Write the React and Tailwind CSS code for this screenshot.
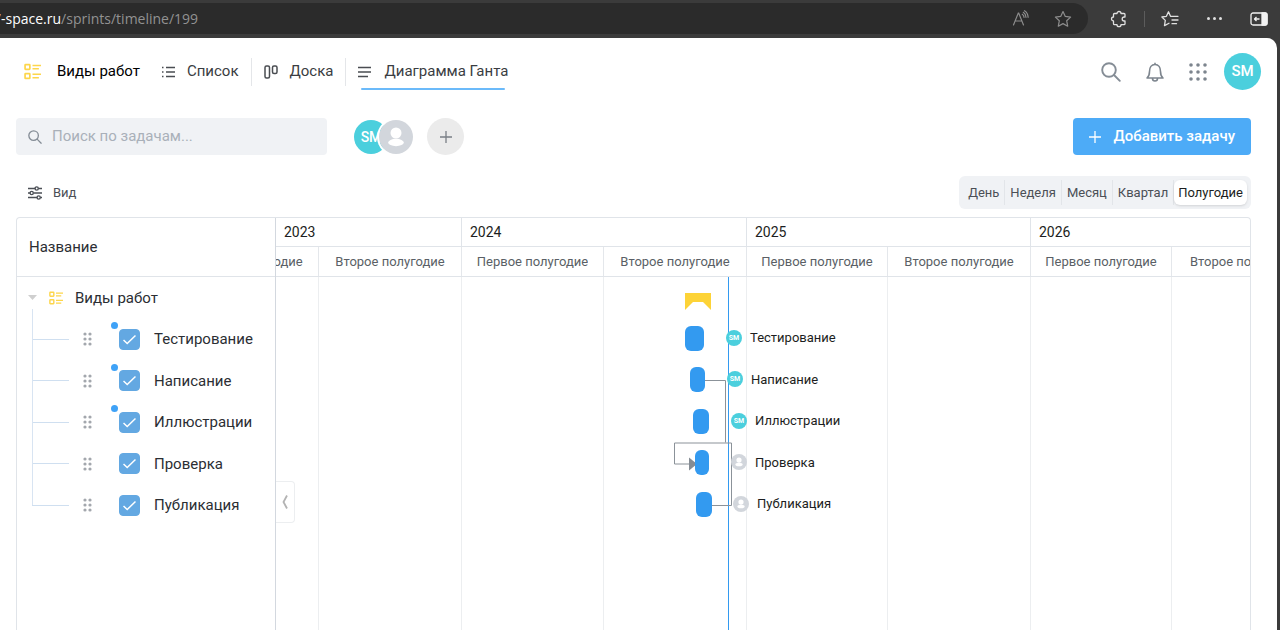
const people = { sm: 'SM', none: null };

const tasks = [
  { name: 'Тестирование', bar: 409, width: 19, tag: 450, who: people.sm, fresh: true },
  { name: 'Написание', bar: 414, width: 15, tag: 451, who: people.sm, fresh: true },
  { name: 'Иллюстрации', bar: 417, width: 16, tag: 455, who: people.sm, fresh: true },
  { name: 'Проверка', bar: 419, width: 14, tag: 455, who: people.none, fresh: false },
  { name: 'Публикация', bar: 420, width: 16, tag: 457, who: people.none, fresh: false },
];

function ReadAloud() {
  return (
    <svg width="18" height="18" viewBox="0 0 18 18" fill="none" stroke="#8d8d8d" strokeWidth="1.2" strokeLinecap="round">
      <path d="M1.500 15 6.300 3h.4l4.800 12M3.200 11h6.600M10.300 4.300c1 .7 1.600 1.700 1.800 3M11.300 2.300c1.600 1 2.500 2.700 2.700 5M12.500.700c2.200 1.300 3.500 3.600 3.600 6.600" />
    </svg>
  );
}

function Star() {
  return (
    <svg width="18" height="18" viewBox="0 0 18 18" fill="none" stroke="#8d8d8d" strokeWidth="1.2" strokeLinejoin="round">
      <path d="m9 1.500 2.300 4.900 5.300.7-3.900 3.700 1 5.400L9 13.600l-4.700 2.600 1-5.400L1.400 7.100l5.300-.7z" />
    </svg>
  );
}

function Puzzle() {
  return (
    <svg width="18" height="18" viewBox="0 0 18 18" fill="none" stroke="#e0e0e0" strokeWidth="1.300" strokeLinejoin="round">
      <path d="M4.500 3.500H7a2 2 0 0 1 4 0h3a1 1 0 0 1 1 1V7h-.8a2 2 0 0 0 0 4h.8v2.700a1 1 0 0 1-1 1h-3a2 2 0 0 1-4 0H4.500a1 1 0 0 1-1-1V11a2 2 0 0 1 0-4V4.500a1 1 0 0 1 1-1z" />
    </svg>
  );
}

function Favorites() {
  return (
    <svg width="18" height="18" viewBox="0 0 18 18" fill="none" stroke="#e0e0e0" strokeWidth="1.300" strokeLinejoin="round" strokeLinecap="round">
      <path d="M9.500 6.300 7.500 1.800 5.400 6.300.9 7l3.400 3.400-.8 5.200L8 13.200M9.500 6.300H17M11 10h6M11 13.700h4.500" />
    </svg>
  );
}

function SidePanel() {
  return (
    <svg width="18" height="14" viewBox="0 0 18 14" fill="none" stroke="#f2f2f2" strokeWidth="1.300" strokeLinejoin="round">
      <rect x="1" y="1" width="16" height="12" rx="2" />
      <path d="M12 1h3a2 2 0 0 1 2 2v8a2 2 0 0 1-2 2h-3z" fill="#f2f2f2" />
      <path d="M9.500 7h-5M6.500 5l-2 2 2 2" />
    </svg>
  );
}

function Board({ size }) {
  return (
    <svg width={size} height={size} viewBox="0 0 16 16" fill="none" stroke="#fdd64b" strokeWidth="1.600">
      <rect x="1" y="1.500" width="4.500" height="4.500" rx="0.500" />
      <rect x="1" y="10" width="4.500" height="4.500" rx="0.500" />
      <path d="M8 2.300h8M8 5.500h6M8 10.600h8M8 13.900h6" strokeWidth="1.400" />
    </svg>
  );
}

function Search({ size }) {
  return (
    <svg width={size} height={size} viewBox="0 0 20 20" fill="none" stroke="#858d96" strokeWidth="1.900" strokeLinecap="round">
      <circle cx="8" cy="8" r="6.800" />
      <path d="m13 13 5.800 5.800" />
    </svg>
  );
}

function Person({ className }) {
  return (
    <svg className={className} viewBox="0 0 34 34">
      <circle cx="17" cy="17" r="17" fill="#d2d6dc" />
      <circle cx="17" cy="13" r="5.500" fill="#fff" />
      <ellipse cx="17" cy="22.500" rx="7.800" ry="3.700" fill="#fff" />
    </svg>
  );
}

function Plus({ stroke }) {
  return (
    <svg width="12" height="12" viewBox="0 0 12 12" stroke={stroke} strokeWidth="1.300">
      <path d="M6 0v12M0 6h12" />
    </svg>
  );
}

function Dots({ className, columns, step, r }) {
  return (
    <svg className={className} width={step * (columns - 1) + 4} height={step * 2 + 4}>
      {[0, 1, 2].map((y) =>
        Array.from({ length: columns }, (_, x) => (
          <circle key={`${x}-${y}`} cx={2 + x * step} cy={2 + y * step} r={r} fill="currentColor" />
        )),
      )}
    </svg>
  );
}

function BrowserBar() {
  return (
    <div className="flex h-[38px] items-center pt-[3px] pb-[4px] text-[#e0e0e0]">
      <div className="flex h-[31px] min-w-0 flex-1 items-center rounded-r-full bg-[#2b2b2b] pr-4">
        <div className="min-w-0 flex-1 overflow-hidden whitespace-nowrap font-['Open_Sans',sans-serif] text-sm text-[#929292]">
          <span className="-ml-[7px] text-white">7-space.ru</span>/sprints/timeline/199
        </div>
        <div className="flex items-center gap-6">
          <button aria-label="Прочесть вслух"><ReadAloud /></button>
          <button aria-label="В избранное"><Star /></button>
        </div>
      </div>
      <div className="flex items-center pr-3 pl-[22px]">
        <button aria-label="Расширения"><Puzzle /></button>
        <span className="mx-4 h-4 w-px bg-[#5c5c5c]" />
        <button aria-label="Избранное"><Favorites /></button>
        <button aria-label="Меню" className="mx-7 flex gap-[3px]">
          <i className="size-[3px] rounded-full bg-current" />
          <i className="size-[3px] rounded-full bg-current" />
          <i className="size-[3px] rounded-full bg-current" />
        </button>
        <button aria-label="Боковая панель"><SidePanel /></button>
      </div>
    </div>
  );
}

function TopNav() {
  return (
    <header className="flex h-[67px] items-center justify-between pr-4 pl-6">
      <nav className="flex items-center text-[15px] text-[#3a3d42]">
        <a href="#work" className="flex items-center gap-4 text-black">
          <Board size={17} />
          Виды работ
        </a>
        <a href="#list" className="ml-[22px] flex items-center gap-3 pr-3">
          <svg width="13" height="12" viewBox="0 0 13 12" fill="none" stroke="#4a4d52" strokeWidth="1.400">
            <path d="M0 1.500h1.500M0 6h1.500M0 10.500h1.500M4 1.500h9M4 6h9M4 10.500h9" />
          </svg>
          Список
        </a>
        <a href="#board" className="flex h-7 items-center gap-3 border-x border-[#e4e6e9] px-3">
          <svg width="14" height="14" viewBox="0 0 14 14" fill="none" stroke="#4a4d52" strokeWidth="1.500">
            <rect x="1" y="1" width="4.500" height="12" rx="1.500" />
            <rect x="8.500" y="1" width="4.500" height="7.500" rx="1.500" />
          </svg>
          Доска
        </a>
        <a href="#gantt" className="relative ml-3 flex h-9 items-center gap-3">
          <svg width="14" height="12" viewBox="0 0 14 12" fill="none" stroke="#4a4d52" strokeWidth="1.500">
            <path d="M0 1.500h13M0 6h13M0 10.500h10" />
          </svg>
          Диаграмма Ганта
          <span className="absolute inset-x-[3px] bottom-0 h-[2px] rounded-full bg-[#6bbafa]" />
        </a>
      </nav>
      <div className="flex items-center text-[#7d858e]">
        <button aria-label="Поиск"><Search size={20} /></button>
        <button aria-label="Уведомления" className="ml-6">
          <svg width="20" height="20" viewBox="0 0 20 20" fill="none" stroke="#7d858e" strokeWidth="1.600" strokeLinejoin="round">
            <path d="M2 16c1.800-1.500 2.500-3.300 2.500-6.500C4.500 5.500 6.500 2.500 10 2.500s5.500 3 5.500 7c0 3.200.7 5 2.500 6.500zM7.500 16.500a2.500 2.500 0 0 0 5 0M10 .8v1.700" />
          </svg>
        </button>
        <button aria-label="Приложения" className="ml-6"><Dots columns={3} step={7} r={1.8} /></button>
        <button className="ml-[17px] size-[37px] rounded-full bg-[#4bcfdd] text-[15px] font-medium text-white">SM</button>
      </div>
    </header>
  );
}

function Toolbar() {
  return (
    <div className="flex h-[63px] items-center justify-between pr-[26px] pl-4">
      <div className="flex items-center">
        <label className="flex h-[37px] w-[311px] items-center gap-[10px] rounded bg-[#f0f2f5] px-3">
          <Search size={14} />
          <input
            type="search"
            aria-label="Поиск по задачам"
            placeholder="Поиск по задачам..."
            className="min-w-0 flex-1 bg-transparent text-[15px] outline-none placeholder:text-[#a9b0b9]"
          />
        </label>
        <div className="ml-[27px] flex">
          <span className="grid size-[34px] place-items-center rounded-full bg-[#4bcfdd] text-sm font-medium text-white">SM</span>
          <span className="z-10 -ml-[9px] rounded-full ring-2 ring-white"><Person className="size-[34px]" /></span>
        </div>
        <button aria-label="Добавить участника" className="ml-[14px] grid size-[37px] place-items-center rounded-full bg-[#ebebeb]">
          <Plus stroke="#7a7f86" />
        </button>
      </div>
      <button className="flex h-[37px] items-center gap-3 rounded bg-[#4dabf7] px-4 text-[15px] font-medium text-white">
        <Plus stroke="#fff" />
        Добавить задачу
      </button>
    </div>
  );
}

function ViewBar() {
  const scales = ['День', 'Неделя', 'Месяц', 'Квартал'];
  return (
    <div className="flex h-[49px] items-center justify-between pr-[26px] pl-7 text-[13px] text-[#4b4f56]">
      <button className="flex items-center gap-[11px]">
        <svg width="14" height="14" viewBox="0 0 14 14" fill="none" stroke="#4b4f56" strokeWidth="1.400">
          <path d="M0 2.500h7M10.500 2.500H14M0 7h2M5.500 7H14M0 11.500h9M12.500 11.500H14" />
          <circle cx="8.700" cy="2.500" r="1.600" />
          <circle cx="3.700" cy="7" r="1.600" />
          <circle cx="10.700" cy="11.500" r="1.600" />
        </svg>
        Вид
      </button>
      <div className="flex h-[33px] items-center rounded-md bg-[#f0f2f5] px-1">
        {scales.map((s) => (
          <button key={s} className="h-[25px] border-r border-[#e2e5e9] px-[5px]">{s}</button>
        ))}
        <button className="h-[25px] rounded-md bg-white px-1 text-[#1c1e21] shadow-sm">Полугодие</button>
      </div>
    </div>
  );
}

function TaskTree() {
  return (
    <div className="z-10 w-[259px] shrink-0 border-r border-[#d3d8df] text-[15px] text-[#2b2e33]">
      <div className="flex h-[59px] items-center border-b border-[#e0e4e9] px-3">Название</div>
      <div className="grid h-[249px] grid-rows-6">
        <div className="flex items-center">
          <button aria-label="Свернуть" className="ml-[11px]">
            <svg width="9" height="5" viewBox="0 0 9 5"><path d="M0 0h9L4.500 5z" fill="#cfcfcf" /></svg>
          </button>
          <span className="mr-3 ml-3"><Board size={14} /></span>
          Виды работ
        </div>
        {tasks.map((t, i) => (
          <div key={t.name} className="relative flex items-center pl-[15px]">
            <span className={i === 0 ? 'absolute bottom-1/2 left-[15px] h-[30px] w-px bg-[#d8e4f2]' : 'absolute bottom-1/2 left-[15px] h-full w-px bg-[#d8e4f2]'} />
            <span className="h-px w-[37px] bg-[#cfdff0]" />
            <Dots className="ml-[14px] text-[#a3a7ad]" columns={2} step={5} r={1.6} />
            <label className="relative ml-[27px] flex items-center gap-[14px]">
              {t.fresh && <span className="absolute -top-[6px] -left-2 size-[7px] rounded-full bg-[#3fa2f7]" />}
              <input
                type="checkbox"
                defaultChecked
                className="peer size-[21px] appearance-none rounded border border-[#63a8e2] checked:bg-[#63a8e2]"
              />
              <svg className="pointer-events-none absolute left-1 hidden size-[13px] peer-checked:block" viewBox="0 0 13 13" fill="none" stroke="#fff" strokeWidth="1.500">
                <path d="m.5 7 3.700 3.500L12.500 2.500" />
              </svg>
              {t.name}
            </label>
          </div>
        ))}
      </div>
    </div>
  );
}

const years = [
  { label: '2023', width: 'w-[186px]' },
  { label: '2024', width: 'w-[285px]' },
  { label: '2025', width: 'w-[284px]' },
  { label: '2026', width: 'flex-1 border-r-0' },
];

const halves = [
  { label: 'Первое полугодие', width: 'w-[143px] -ml-[100px] justify-center' },
  { label: 'Второе полугодие', width: 'w-[143px] justify-center' },
  { label: 'Первое полугодие', width: 'w-[142px] justify-center' },
  { label: 'Второе полугодие', width: 'w-[143px] justify-center' },
  { label: 'Первое полугодие', width: 'w-[141px] justify-center' },
  { label: 'Второе полугодие', width: 'w-[143px] justify-center' },
  { label: 'Первое полугодие', width: 'w-[141px] justify-center' },
  { label: 'Второе полугодие', width: 'min-w-0 flex-1 border-r-0 pl-[18px]' },
];

function Timeline() {
  return (
    <div className="relative flex min-w-0 flex-1 flex-col overflow-hidden">
      <div className="flex h-[29px] border-b border-[#e0e4e9] text-sm text-[#1c1e21]">
        {years.map((y) => (
          <div key={y.label} className={`flex shrink-0 items-center border-r border-[#e0e4e9] pl-2 ${y.width}`}>{y.label}</div>
        ))}
      </div>
      <div className="flex h-[30px] border-b border-[#e0e4e9] text-[13px] text-[#5a5f66]">
        {halves.map((h, i) => (
          <div key={i} className={`flex items-center border-r border-[#e4e7eb] ${i < 7 ? 'shrink-0' : ''} ${h.width}`}>
            <span className="overflow-hidden whitespace-nowrap">{h.label}</span>
          </div>
        ))}
      </div>
      <div className="relative flex flex-1">
        {halves.map((h, i) => (
          <div key={i} className={`border-r border-[#eceef0] ${i < 7 ? 'shrink-0' : ''} ${h.width}`} />
        ))}
        <span className="absolute inset-y-0 left-[452px] w-px bg-[#339af0]" />
        <svg className="absolute top-0 left-0" width="500" height="249" fill="none">
          <path d="M409 16h26v17l-8-8h-10l-8 8z" fill="#fdd337" />
          <path d="M429 103.500h20.500v62M436 228.500h19.500v-62.500H398.500v21h16" stroke="#8b9299" />
          <path d="M413 180.500 421 187l-8 6.500z" fill="#858c94" />
        </svg>
        <div className="absolute inset-x-0 top-0 grid h-[249px] grid-rows-6">
          <div />
          {tasks.map((t) => (
            <div key={t.name} className="relative">
              <span className="absolute top-[7px] h-[25px] rounded-md bg-[#339af0]" style={{ left: t.bar, width: t.width }} />
              <div className="absolute inset-y-0 flex items-center gap-2 pb-[3px] text-[13px] text-[#1c1e21]" style={{ left: t.tag }}>
                {t.who ? (
                  <span className="grid size-4 place-items-center rounded-full bg-[#4bcfdd] text-[7px] font-bold text-white">{t.who}</span>
                ) : (
                  <Person className="size-4" />
                )}
                {t.name}
              </div>
            </div>
          ))}
        </div>
      </div>
      <button aria-label="Скрыть список" className="absolute top-[263px] left-0 grid h-[42px] w-[19px] place-items-center rounded-r border border-l-0 border-[#eceef0] bg-white">
        <svg width="6" height="14" viewBox="0 0 6 14" fill="none" stroke="#b3b3b3" strokeWidth="1.800"><path d="M5 .5 1.500 7 5 13.500" /></svg>
      </button>
    </div>
  );
}

export default function App() {
  return (
    <div className="flex h-screen flex-col bg-[#3b3b3b] font-[Roboto,sans-serif]">
      <BrowserBar />
      <main className="mr-[3px] flex min-h-0 flex-1 flex-col rounded-tr-[10px] bg-white">
        <TopNav />
        <Toolbar />
        <ViewBar />
        <section className="mr-[26px] ml-4 flex min-h-0 flex-1 overflow-hidden rounded-t border border-b-0 border-[#e0e4e9]">
          <TaskTree />
          <Timeline />
        </section>
      </main>
    </div>
  );
}
